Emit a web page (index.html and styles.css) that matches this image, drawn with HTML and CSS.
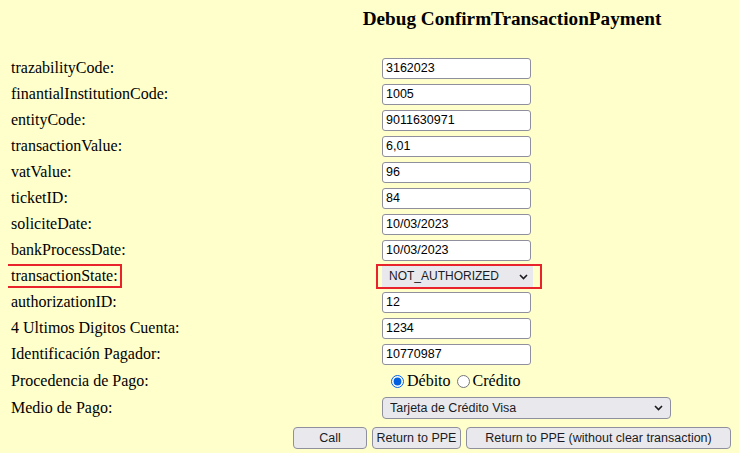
FILE: index.html
```html
<!DOCTYPE html>
<html lang="es">
<head>
    <meta charset="UTF-8">
    <meta name="viewport" content="width=device-width, initial-scale=1.0">
    <title>Debug ConfirmTransactionPayment</title>
    <link rel="stylesheet" href="styles.css">
</head>
<body>
    <h3 class="title">Debug ConfirmTransactionPayment</h3>

    <form class="debug-form">
        <div class="row">
            <label class="field-label" for="trazabilityCode">trazabilityCode:</label>
            <input type="text" id="trazabilityCode" class="field-input" value="3162023">
        </div>
        <div class="row">
            <label class="field-label" for="finantialInstitutionCode">finantialInstitutionCode:</label>
            <input type="text" id="finantialInstitutionCode" class="field-input" value="1005">
        </div>
        <div class="row">
            <label class="field-label" for="entityCode">entityCode:</label>
            <input type="text" id="entityCode" class="field-input" value="9011630971">
        </div>
        <div class="row">
            <label class="field-label" for="transactionValue">transactionValue:</label>
            <input type="text" id="transactionValue" class="field-input" value="6,01">
        </div>
        <div class="row">
            <label class="field-label" for="vatValue">vatValue:</label>
            <input type="text" id="vatValue" class="field-input" value="96">
        </div>
        <div class="row">
            <label class="field-label" for="ticketID">ticketID:</label>
            <input type="text" id="ticketID" class="field-input" value="84">
        </div>
        <div class="row">
            <label class="field-label" for="soliciteDate">soliciteDate:</label>
            <input type="text" id="soliciteDate" class="field-input" value="10/03/2023">
        </div>
        <div class="row">
            <label class="field-label" for="bankProcessDate">bankProcessDate:</label>
            <input type="text" id="bankProcessDate" class="field-input" value="10/03/2023">
        </div>
        <div class="row">
            <div class="field-label">
                <label class="highlight-label" for="transactionState">transactionState:</label>
            </div>
            <div class="highlight-select">
                <div class="select-wrap state-wrap">
                    <select id="transactionState" class="field-select state-select">
                        <option>NOT_AUTHORIZED</option>
                        <option>OK</option>
                        <option>PENDING</option>
                        <option>FAILED</option>
                    </select>
                    <svg class="chevron" width="9" height="6" viewBox="0 0 9 6"><path d="M1 1 L4.5 4.5 L8 1" fill="none" stroke="#1b1b1f" stroke-width="1.6"/></svg>
                </div>
            </div>
        </div>
        <div class="row">
            <label class="field-label" for="authorizationID">authorizationID:</label>
            <input type="text" id="authorizationID" class="field-input" value="12">
        </div>
        <div class="row">
            <label class="field-label" for="lastDigits">4 Ultimos Digitos Cuenta:</label>
            <input type="text" id="lastDigits" class="field-input" value="1234">
        </div>
        <div class="row">
            <label class="field-label" for="payerId">Identificación Pagador:</label>
            <input type="text" id="payerId" class="field-input" value="10770987">
        </div>
        <div class="row row-radio">
            <span class="field-label">Procedencia de Pago:</span>
            <div class="radio-group">
                <label class="radio-option"><input type="radio" name="origin" checked> Débito</label>
                <label class="radio-option"><input type="radio" name="origin"> Crédito</label>
            </div>
        </div>
        <div class="row">
            <label class="field-label" for="paymentMethod">Medio de Pago:</label>
            <div class="select-wrap method-wrap">
                <select id="paymentMethod" class="field-select method-select">
                    <option>Tarjeta de Crédito Visa</option>
                    <option>Tarjeta de Crédito Mastercard</option>
                    <option>Tarjeta de Débito</option>
                </select>
                <svg class="chevron" width="9" height="6" viewBox="0 0 9 6"><path d="M1 1 L4.5 4.5 L8 1" fill="none" stroke="#1b1b1f" stroke-width="1.6"/></svg>
            </div>
        </div>

        <div class="actions">
            <button type="button" class="btn btn-call">Call</button>
            <button type="button" class="btn btn-return">Return to PPE</button>
            <button type="button" class="btn btn-return-keep">Return to PPE (without clear transaction)</button>
        </div>
    </form>
</body>
</html>
```

FILE: styles.css
```css
body {
    margin: 8px;
    background-color: #ffffcc;
    color: #000;
    font-family: "Liberation Serif", "Times New Roman", serif;
    font-size: 16px;
}

.title {
    margin: 0 0 25px 285px;
    width: 438px;
    text-align: center;
    font-size: 19.2px;
    font-weight: bold;
}

.debug-form {
    margin: 0;
    padding-left: 3px;
}

.row {
    display: flex;
    align-items: center;
    height: 26px;
}

.row-radio {
    height: 28px;
}

.field-label {
    width: 371px;
    flex-shrink: 0;
}

/* highlighted (red box) on transactionState */
.highlight-label {
    display: inline-block;
    margin-left: -11px;
    padding: 1px 2px 1px 9px;
    border: 2px solid #e8232b;
    line-height: 18px;
}

.highlight-select {
    margin-left: -6px;
    padding: 0 7px 0 4px;
    border: 2px solid #e8232b;
    display: flex;
    align-items: center;
    height: 21px;
}

.field-input {
    box-sizing: border-box;
    width: 149px;
    height: 21px;
    margin: 0;
    padding: 1px 3px;
    border: 1px solid #8f8f9d;
    border-radius: 3px;
    background: #fff;
    font-family: "Liberation Sans", Arial, sans-serif;
    font-size: 12.5px;
    color: #000;
}

.select-wrap {
    position: relative;
    display: inline-flex;
}

.field-select {
    box-sizing: border-box;
    -webkit-appearance: none;
    appearance: none;
    height: 21px;
    margin: 0;
    padding: 0 20px 0 7px;
    border: 1px solid #8f8f9d;
    border-radius: 3px;
    background-color: #e9e9ed;
    font-family: "Liberation Sans", Arial, sans-serif;
    font-size: 12.5px;
    color: #1b1b1f;
}

.state-select {
    width: 151px;
    padding-left: 6px;
    border-radius: 0;
    border-color: #e9e9ed;
    font-size: 12px;
}

.state-wrap .chevron {
    right: 5px;
}

.method-select {
    width: 289px;
    height: 22px;
    border-radius: 4px;
}

.chevron {
    position: absolute;
    right: 8px;
    top: 8px;
    pointer-events: none;
}

.radio-group {
    display: flex;
    align-items: center;
    padding-left: 4px;
}

.radio-option {
    display: inline-flex;
    align-items: center;
    margin-right: 1px;
}

.radio-option input {
    width: 13px;
    height: 13px;
    margin: 0 3px 0 5px;
    accent-color: #0060df;
}

.actions {
    display: flex;
    justify-content: center;
    gap: 5px;
    margin: 6px 0 0 282px;
    width: 438px;
}

.btn {
    box-sizing: border-box;
    height: 22px;
    padding: 0;
    border: 1px solid #8f8f9d;
    border-radius: 4px;
    background-color: #e9e9ed;
    color: #1b1b1f;
    font-family: "Liberation Sans", Arial, sans-serif;
    font-size: 12.5px;
    white-space: nowrap;
    cursor: pointer;
}

.btn-call {
    width: 74px;
}

.btn-return {
    width: 89px;
}

.btn-return-keep {
    width: 265px;
}
```
